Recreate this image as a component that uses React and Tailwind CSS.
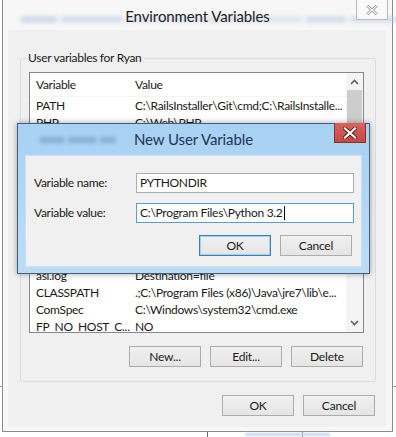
import React from "react";

const font = { fontFamily: 'Lato, "Noto Sans", sans-serif' };

function Btn({ children, def = false }) {
  return (
    <div
      className={`w-[72px] h-[21px] flex items-center justify-center text-[12px] tracking-[-0.2px] text-[#1a1a1a] bg-gradient-to-b from-[#f0f0f0] to-[#e5e5e5] border ${
        def ? "border-[#3c7fb1] shadow-[inset_0_0_0_1px_#9fd0f5]" : "border-[#acacac]"
      }`}
    >
      {children}
    </div>
  );
}

const rows = [
  ["PATH", "C:\\RailsInstaller\\Git\\cmd;C:\\RailsInstalle..."],
  ["PHP", "C:\\Web\\PHP"],
  ["", ""],
  ["", ""],
  ["", ""],
  ["", ""],
  ["", ""],
  ["", ""],
  ["", ""],
  ["", ""],
  ["asl.log", "Destination=file"],
  ["CLASSPATH", ".;C:\\Program Files (x86)\\Java\\jre7\\lib\\e..."],
  ["ComSpec", "C:\\Windows\\system32\\cmd.exe"],
  ["FP_NO_HOST_C...", "NO"],
];

export default function App() {
  return (
    <div className="relative w-[396px] h-[437px] bg-white overflow-hidden tracking-[-0.3px]" style={font}>
      {/* background lines outside window */}
      <div className="absolute left-0 top-[386px] w-[3px] h-px bg-[#9a9a9a]" />
      <div className="absolute left-[393px] top-[386px] w-[3px] h-px bg-[#9a9a9a]" />
      <div className="absolute left-[207px] top-[432px] w-px h-[5px] bg-[#6a6a6a]" />
      <div className="absolute left-[302px] top-[432px] w-px h-[5px] bg-[#6a6a6a]" />
      <div className="absolute left-[245px] top-[433px] w-[85px] h-[3px] bg-[#c9d6ef] blur-[1px]" />

      {/* Outer window */}
      <div className="ml-[2px] w-[391px] h-[432px] border-l border-r border-b border-[#8c8c8c] bg-[#f7f7f7] flex flex-col">
        <div className="relative h-[30px] flex items-center justify-center">
          {/* blurred background showing through the glass */}
          <div className="absolute left-[18px] top-[17px] flex gap-[4px] blur-[2.5px] opacity-60">
            <div className="w-[36px] h-[5px] bg-[#9cb3d8]" />
            <div className="w-[62px] h-[5px] bg-[#a9bde0]" />
            <div className="w-[175px] h-[5px] bg-[#c3d0e8]" />
            <div className="w-[40px] h-[5px] bg-[#a9bde0]" />
            <div className="w-[50px] h-[5px] bg-[#b3c5e4]" />
          </div>
          <div className="relative text-[15px] tracking-[-0.1px] text-[#222] pt-[2px]">Environment Variables</div>
          <div className="absolute left-[353px] top-0 w-[32px] h-[20px] border border-[#b9b9b9] border-t-0 bg-[#f9f9f9] flex items-center justify-center">
            <svg width="12" height="10" viewBox="0 0 12 10">
              <path d="M1 0.5 L11 9.5 M11 0.5 L1 9.5" stroke="#8a8a8a" strokeWidth="2.6" />
              <path d="M1 0.5 L11 9.5 M11 0.5 L1 9.5" stroke="#fbfbfb" strokeWidth="1.2" />
            </svg>
          </div>
        </div>

        <div className="ml-[5px] w-[378px] h-[397px] bg-[#f0f0f0] flex flex-col">
          {/* Group box */}
          <div className="relative mt-[28px] ml-[12px] w-[356px] h-[324px] border border-[#dcdcdc] rounded-[3px] flex flex-col">
            <span className="absolute left-[5px] top-[-10px] px-[2px] bg-[#f0f0f0] text-[12px] text-[#1a1a1a] leading-[18px]">
              User variables for Ryan
            </span>
            <div className="mt-[13px] ml-[8px] w-[335px] h-[261px] border border-[#828790] bg-white flex overflow-hidden">
              <div className="flex-1 flex flex-col text-[12px] text-[#1a1a1a]">
                <div className="h-[24px] shrink-0 flex items-center border-b border-[#f4f4f4]">
                  <span className="w-[105px] pl-[6px]">Variable</span>
                  <span>Value</span>
                </div>
                {rows.map(([a, b], i) => (
                  <div key={i} className="h-[17px] shrink-0 flex items-center whitespace-nowrap">
                    <span className="w-[105px] pl-[6px]">{a}</span>
                    <span>{b}</span>
                  </div>
                ))}
              </div>
              <div className="w-[17px] bg-[#f4f4f4] flex flex-col items-center">
                <div className="h-[17px] w-full flex items-center justify-center">
                  <svg width="9" height="6" viewBox="0 0 9 6">
                    <path d="M1 5 L4.5 1.5 L8 5" stroke="#606060" strokeWidth="1.6" fill="none" />
                  </svg>
                </div>
                <div className="w-[15px] h-[120px] bg-[#cdcdcd]" />
                <div className="flex-1" />
                <div className="h-[17px] w-full flex items-center justify-center mb-[1px]">
                  <svg width="9" height="6" viewBox="0 0 9 6">
                    <path d="M1 1 L4.5 4.5 L8 1" stroke="#606060" strokeWidth="1.6" fill="none" />
                  </svg>
                </div>
              </div>
            </div>
            <div className="mt-[13px] mr-[12px] flex justify-end gap-[9px]">
              <Btn>New...</Btn>
              <Btn>Edit...</Btn>
              <Btn>Delete</Btn>
            </div>
          </div>

          <div className="mt-[13px] mr-[11px] flex justify-end gap-[9px]">
            <Btn>OK</Btn>
            <Btn>Cancel</Btn>
          </div>
        </div>
      </div>

      {/* New User Variable dialog */}
      <div className="absolute left-[17px] top-[123px] w-[353px] h-[151px] border border-[#3f5e80] bg-gradient-to-b from-[#a8d1f3] to-[#bcdcf6] shadow-[0_0_6px_rgba(0,0,0,0.35)] flex flex-col">
        <div className="relative h-[31px] flex items-center justify-center">
          <div className="absolute left-[22px] top-[13px] flex gap-[4px] blur-[2.2px] opacity-60">
            <div className="w-[24px] h-[6px] bg-[#6f94c0]" />
            <div className="w-[28px] h-[6px] bg-[#6f94c0]" />
            <div className="w-[16px] h-[6px] bg-[#6f94c0]" />
          </div>
          <span className="relative text-[15px] tracking-[-0.1px] text-[#1c3559]">New User Variable</span>
          <div className="absolute left-[316px] top-[-1px] w-[32px] h-[20px] bg-gradient-to-b from-[#d9625c] to-[#c44a44] border border-[#8e2f2c] border-t-0 flex items-center justify-center">
            <svg width="14" height="12" viewBox="0 0 14 12">
              <path d="M2 1.5 L12 10.5 M12 1.5 L2 10.5" stroke="#5a1d1b" strokeWidth="4" strokeLinecap="square" />
              <path d="M2 1.5 L12 10.5 M12 1.5 L2 10.5" stroke="#ffffff" strokeWidth="2.2" strokeLinecap="square" />
            </svg>
          </div>
        </div>
        <div className="mx-[7px] mb-[6px] flex-1 bg-[#f0f0f0] border border-[#c9dff2] flex flex-col text-[12px] text-[#1a1a1a]">
          <div className="mt-[17px] flex items-center">
            <span className="w-[110px] pl-[8px]">Variable name:</span>
            <div className="w-[218px] h-[20px] bg-white border border-[#abadb3] flex items-center pl-[3px]">
              PYTHONDIR
            </div>
          </div>
          <div className="mt-[10px] flex items-center">
            <span className="w-[110px] pl-[8px]">Variable value:</span>
            <div className="w-[218px] h-[20px] bg-white border border-[#569de5] flex items-center pl-[3px]">
              C:\Program Files\Python 3.2
              <span className="inline-block w-px h-[14px] bg-black ml-[1px]" />
            </div>
          </div>
          <div className="mt-[12px] mr-[9px] flex justify-end gap-[9px]">
            <Btn def>OK</Btn>
            <Btn>Cancel</Btn>
          </div>
        </div>
      </div>
    </div>
  );
}
